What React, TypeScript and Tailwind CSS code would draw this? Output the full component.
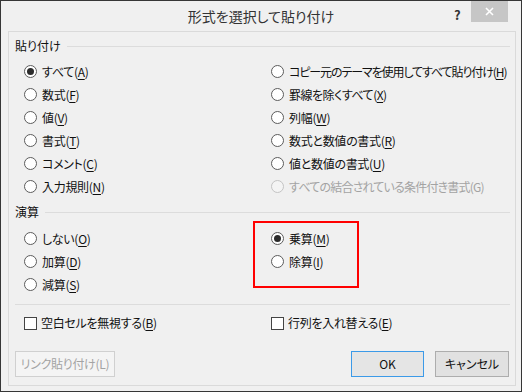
import React from "react";

interface OptionProps {
    label: string
    mnemonic: string
    checked?: boolean
    disabled?: boolean
    tight?: string
}

function Radio(props: OptionProps) {
    const spacing = props.tight ?? "tracking-[-0.3px]";
    return (
        <div className="flex h-[23px] items-center whitespace-nowrap">
            <span
                className={
                    props.disabled
                        ? "flex h-[13px] w-[13px] shrink-0 items-center justify-center rounded-full border border-[#c4c4c4] bg-[#f4f4f4]"
                        : "flex h-[13px] w-[13px] shrink-0 items-center justify-center rounded-full border border-[#5c5c5c] bg-white"
                }
            >
                {props.checked && <span className="h-[7px] w-[7px] rounded-full bg-[#2b2b2b]"></span>}
            </span>
            <span className={(props.disabled ? "ml-[5px] text-[#a3a3a3] " : "ml-[5px] text-[#111] ") + spacing}>
                {props.label}(
                {props.disabled ? props.mnemonic : <span className="underline underline-offset-2">{props.mnemonic}</span>}
                )
            </span>
        </div>
    )
}

function Check(props: OptionProps) {
    return (
        <div className="flex h-[20px] items-center whitespace-nowrap">
            <span className="h-[13px] w-[13px] shrink-0 border border-[#444] bg-white"></span>
            <span className="ml-[4px] tracking-[-0.3px] text-[#111]">
                {props.label}(<span className="underline underline-offset-2">{props.mnemonic}</span>)
            </span>
        </div>
    )
}

function SectionHeader(props: { title: string }) {
    return (
        <div className="flex h-[16px] items-center pl-[6px] pr-[5px]">
            <span className="text-[#111]">{props.title}</span>
            <div className="ml-[6px] h-px flex-1 bg-[#dcdcdc]"></div>
        </div>
    )
}

export default function App() {
    return (
        <div className="relative flex h-[392px] w-[522px] flex-col border border-[#363636] bg-[#f0f0f0] font-['Noto_Sans_CJK_JP',sans-serif] text-[12px] [font-feature-settings:'palt']">

            <div className="relative flex h-[30px] shrink-0 items-center justify-center">
                <span className="mt-[1px] text-[14px] text-[#333]">形式を選択して貼り付け</span>
                <span className="absolute left-[453px] top-[4px] text-[13px] font-bold text-[#333]">?</span>
                <div className="absolute left-[470px] top-0 flex h-[21px] w-[37px] items-center justify-center bg-[#c6c6c6]">
                    <svg width="9" height="9" viewBox="0 0 9 9">
                        <path d="M1 1 L8 8 M8 1 L1 8" stroke="white" strokeWidth="1.6"/>
                    </svg>
                </div>
            </div>

            <div className="mb-[5px] ml-[7px] mr-[5px] flex flex-1 flex-col border border-[#dadada]">

                <div className="pt-[6px]">
                    <SectionHeader title="貼り付け"/>
                </div>

                <div className="mt-[6px] grid grid-cols-[247px_1fr] pl-[15px]">
                    <div className="flex flex-col">
                        <Radio label="すべて" mnemonic="A" checked/>
                        <Radio label="数式" mnemonic="F"/>
                        <Radio label="値" mnemonic="V"/>
                        <Radio label="書式" mnemonic="T"/>
                        <Radio label="コメント" mnemonic="C"/>
                        <Radio label="入力規則" mnemonic="N"/>
                    </div>
                    <div className="flex flex-col">
                        <Radio label="コピー元のテーマを使用してすべて貼り付け" mnemonic="H" tight="tracking-[-1.1px]"/>
                        <Radio label="罫線を除くすべて" mnemonic="X" tight="tracking-[-0.5px]"/>
                        <Radio label="列幅" mnemonic="W"/>
                        <Radio label="数式と数値の書式" mnemonic="R"/>
                        <Radio label="値と数値の書式" mnemonic="U"/>
                        <Radio label="すべての結合されている条件付き書式" mnemonic="G" disabled tight="tracking-[-0.8px]"/>
                    </div>
                </div>

                <div className="mt-[6px]">
                    <SectionHeader title="演算"/>
                </div>

                <div className="mt-[7px] grid grid-cols-[247px_1fr] pl-[15px]">
                    <div className="flex flex-col">
                        <Radio label="しない" mnemonic="O"/>
                        <Radio label="加算" mnemonic="D"/>
                        <Radio label="減算" mnemonic="S"/>
                    </div>
                    <div className="flex flex-col">
                        <Radio label="乗算" mnemonic="M" checked/>
                        <Radio label="除算" mnemonic="I"/>
                    </div>
                </div>

                <div className="ml-[6px] mr-[5px] mt-[8px] h-px bg-[#dcdcdc]"></div>

                <div className="mt-[8px] grid grid-cols-[247px_1fr] pl-[15px]">
                    <Check label="空白セルを無視する" mnemonic="B"/>
                    <Check label="行列を入れ替える" mnemonic="E"/>
                </div>

                <div className="mt-[18px] flex items-center pl-[6px] pr-[6px]">
                    <button className="flex h-[26px] w-[100px] items-center justify-center whitespace-nowrap border border-[#d0d0d0] bg-[#f4f4f4] tracking-[-0.3px] text-[#a3a3a3]">
                        リンク貼り付け(L)
                    </button>
                    <div className="flex-1"></div>
                    <button className="flex h-[26px] w-[73px] items-center justify-center border border-[#3c9ae8] bg-[#e5e5e5] text-[#111]">
                        OK
                    </button>
                    <button className="ml-[11px] flex h-[26px] w-[74px] items-center justify-center border border-[#adadad] bg-[#e1e1e1] text-[#111]">
                        キャンセル
                    </button>
                </div>

            </div>

            <div className="pointer-events-none absolute left-[252px] top-[220px] h-[67px] w-[106px] border-2 border-[#ff0000]"></div>

        </div>
    )
}
